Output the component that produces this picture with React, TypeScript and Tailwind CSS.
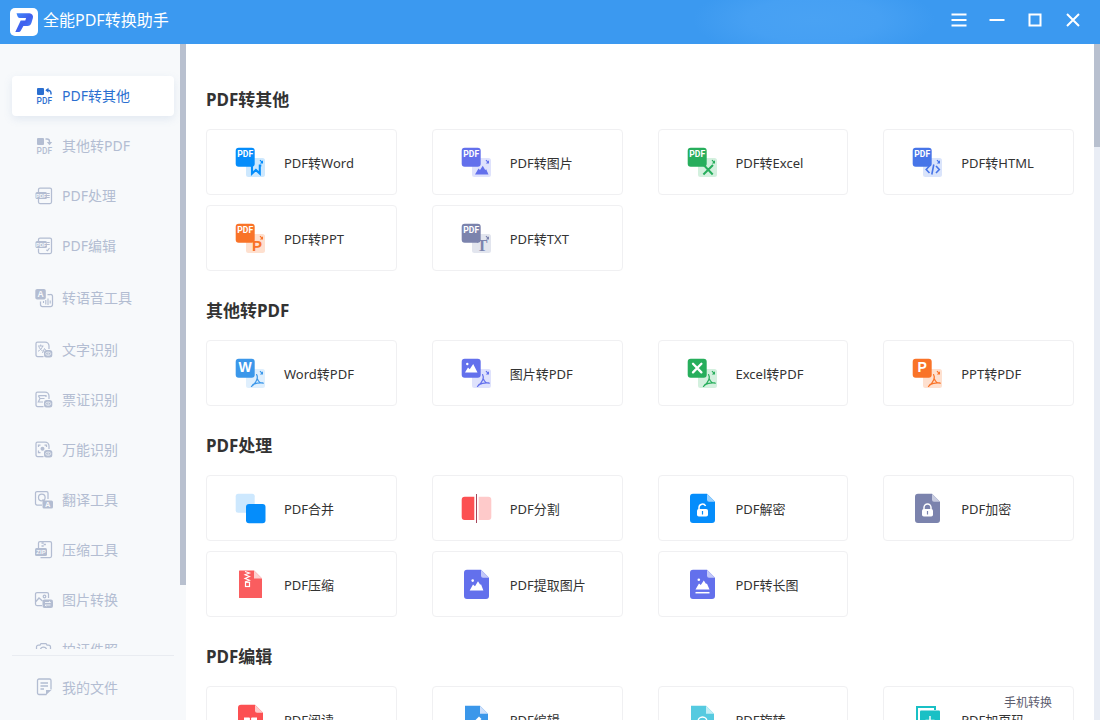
import type { ReactNode } from "react";

/* ---------- shared icon pieces ---------- */

function ToolSvg({ children }: { children: ReactNode }) {
  return (
    <svg viewBox="0 0 32 32" className="size-8 shrink-0" aria-hidden="true">
      {children}
    </svg>
  );
}

const LETTER = "'Liberation Sans', sans-serif";

function PairIcon({
  color,
  light,
  front,
  back,
}: {
  color: string;
  light: string;
  front: ReactNode;
  back: ReactNode;
}) {
  return (
    <ToolSvg>
      <rect x="12" y="12" width="19" height="19" rx="2.5" fill={light} />
      <rect x="1.7" y="1.7" width="19" height="19" rx="3" fill={color} />
      <path d="M26 14.200l2.200 2.200" stroke={color} strokeWidth="1.2" fill="none" />
      <path d="M29 14.200v3.200h-3.200z" fill={color} />
      {front}
      {back}
    </ToolSvg>
  );
}

const pdfTag = (
  <text x="11.2" y="11.3" fontSize="8.6" fontWeight="700" fill="#fff" textAnchor="middle" fontFamily="Roboto, sans-serif">
    PDF
  </text>
);

function frontLetter(letter: string) {
  return (
    <text x="11.2" y="15.2" fontSize="14" fontWeight="700" fill="#fff" textAnchor="middle" fontFamily={LETTER}>
      {letter}
    </text>
  );
}

function acrobat(color: string) {
  return (
    <path
      d="M22.6 17.6c1.6 2.4.6 7.6-5.2 11.8M23.3 21.6c.9 2.900 2.600 4.600 6 4.600M18.800 27.600c3-1.500 6.200-2.100 9.800-1.700"
      stroke={color}
      strokeWidth="1.2"
      strokeLinecap="round"
      fill="none"
    />
  );
}

function Doc({ color, fold, children }: { color: string; fold: string; children?: ReactNode }) {
  return (
    <ToolSvg>
      <path d="M7 1.700h14l8 8V28a3 3 0 0 1-3 3H7a3 3 0 0 1-3-3V4.700a3 3 0 0 1 3-3z" fill={color} />
      <path d="M21 1.700l8 8h-6a2 2 0 0 1-2-2z" fill={fold} />
      {children}
    </ToolSvg>
  );
}

/* ---------- tool icons ---------- */

const icons: Record<string, ReactNode> = {
  word: (
    <PairIcon
      color="#058dfb"
      light="#cde8fe"
      front={pdfTag}
      back={
        <path d="M16.500 19.500h1.500v8l3.900-3.600 3.900 3.600v-8h1.500" stroke="#058dfb" strokeWidth="2.100" fill="none" strokeLinejoin="miter" />
      }
    />
  ),
  image: (
    <PairIcon
      color="#6370ec"
      light="#dfe2fc"
      front={pdfTag}
      back={<path d="M15 28.500l3.500-6 1.500 1.500 2.800-4.300 2.400 4.200 1-.700 2.300 5.300z" fill="#6370ec" />}
    />
  ),
  excel: (
    <PairIcon
      color="#27ae5c"
      light="#d3f0de"
      front={pdfTag}
      back={<path d="M17.700 19l9 9.500M27 19l-9.600 9.500" stroke="#27ae5c" strokeWidth="2" fill="none" />}
    />
  ),
  html: (
    <PairIcon
      color="#4775e8"
      light="#dae4fb"
      front={pdfTag}
      back={
        <path
          d="M18.500 20l-3.300 3.500 3.300 3.500M25 20l3.300 3.500L25 27M22.800 18.500l-2 10"
          stroke="#4775e8"
          strokeWidth="1.600"
          fill="none"
        />
      }
    />
  ),
  ppt: (
    <PairIcon
      color="#f97328"
      light="#fee0cf"
      front={pdfTag}
      back={
        <text x="23" y="29" fontSize="15" fontWeight="700" fill="#f97328" textAnchor="middle" fontFamily={LETTER}>
          P
        </text>
      }
    />
  ),
  txt: (
    <PairIcon
      color="#7b83ad"
      light="#e2e5ee"
      front={pdfTag}
      back={
        <text
          x="22"
          y="29"
          fontSize="16"
          fontWeight="700"
          fill="#7b83ad"
          textAnchor="middle"
          fontFamily="'Liberation Serif', serif"
        >
          T
        </text>
      }
    />
  ),
  fromWord: <PairIcon color="#3b97ea" light="#dfeffd" front={frontLetter("W")} back={acrobat("#3b97ea")} />,
  fromImage: (
    <PairIcon
      color="#6370ec"
      light="#dfe2fc"
      front={
        <>
          <path d="M5 15.500l3-5 1.700 1.800 3.500-5.300 4.300 8.500z" fill="#fff" />
          <circle cx="7.300" cy="7" r="1.200" fill="#fff" />
        </>
      }
      back={acrobat("#6370ec")}
    />
  ),
  fromExcel: (
    <PairIcon
      color="#27ae5c"
      light="#d3f0de"
      front={<path d="M7 6.800l8.400 8.600M15.400 6.800L7 15.400" stroke="#fff" strokeWidth="2.300" strokeLinecap="round" />}
      back={acrobat("#27ae5c")}
    />
  ),
  fromPpt: <PairIcon color="#f97328" light="#fee0cf" front={frontLetter("P")} back={acrobat("#f97328")} />,
  merge: (
    <ToolSvg>
      <rect x="1.700" y="1.700" width="19" height="19" rx="2.500" fill="#cde8fe" />
      <rect x="12" y="12" width="19.500" height="19.200" rx="3" fill="#058dfb" />
    </ToolSvg>
  ),
  split: (
    <ToolSvg>
      <path d="M14.300 4.700v23.300H4.700a3 3 0 0 1-3-3V7.700a3 3 0 0 1 3-3z" fill="#fc5052" />
      <path d="M18.700 4.700v23.300h9.600a3 3 0 0 0 3-3V7.700a3 3 0 0 0-3-3z" fill="#fecaca" />
      <path d="M16.500 2v29" stroke="#a5475c" strokeWidth="1" />
    </ToolSvg>
  ),
  unlock: (
    <Doc color="#058dfb" fold="#9bd1fe">
      <path d="M13 18v-2.500a3.500 3.500 0 0 1 6.600-1.500" stroke="#fff" strokeWidth="1.500" fill="none" />
      <rect x="11" y="17" width="11" height="7.500" rx="1.800" fill="#fff" />
      <path d="M16.500 19v3.500" stroke="#058dfb" strokeWidth="1.200" />
    </Doc>
  ),
  lock: (
    <Doc color="#7b83ad" fold="#c8cce0">
      <path d="M13 18v-2.500a3.500 3.500 0 0 1 7 0V18" stroke="#fff" strokeWidth="1.500" fill="none" />
      <rect x="11" y="17" width="11" height="7.500" rx="1.800" fill="#fff" />
      <path d="M16.500 19v3.500" stroke="#7b83ad" strokeWidth="1.200" />
    </Doc>
  ),
  zip: (
    <ToolSvg>
      <path d="M5.500 2.500H20l8 8V29.500a.5.5 0 0 1-.5.500H5.500a.5.500 0 0 1-.5-.500V3a.5.500 0 0 1 .5-.500z" fill="#fa5d5f" />
      <path d="M20 2.500l8 8h-8z" fill="#fdd0d0" />
      <path
        d="M11 3.500l4.500 1.500-4.500 1.800 4.500 1.800-4.500 1.800 4.500 1.800-4.500 1.800"
        stroke="#fff"
        strokeWidth="1.100"
        fill="none"
      />
      <rect x="11.500" y="14.300" width="4" height="4.200" fill="none" stroke="#fff" strokeWidth="1.200" />
    </ToolSvg>
  ),
  extract: (
    <Doc color="#6370ec" fold="#c3c8f8">
      <path d="M9.700 22.500l3.300-6 2 1.800 3-5 2.200 3.500.8-.600 2.400 6.300z" fill="#fff" />
      <circle cx="12.700" cy="12.600" r="1.300" fill="#fff" />
    </Doc>
  ),
  long: (
    <Doc color="#6370ec" fold="#c3c8f8">
      <path d="M9.500 21.500l3.500-6 1.800 1.500 3-4.500 2.300 3.500.8-.500 2.600 6z" fill="#fff" />
      <circle cx="12.800" cy="11.700" r="1.300" fill="#fff" />
      <path d="M9.500 24.700h14" stroke="#fff" strokeWidth="1.500" />
    </Doc>
  ),
  read: (
    <Doc color="#fc5052" fold="#fecaca">
      <path d="M10 14.500h5.200l1.300 1 1.300-1H23v9h-5.200l-1.300 1-1.300-1H10z" fill="#fff" />
      <path d="M16.500 15v9" stroke="#fc5052" strokeWidth="1.200" />
    </Doc>
  ),
  edit: (
    <ToolSvg>
      <path d="M5 2.800h15l8 8V31H5z" fill="#3b97ea" />
      <path d="M20 2.800l8 8h-8z" fill="#cfe0fb" />
      <path d="M12 23l1-3.500 6-6 2.500 2.500-6 6z" fill="#fff" />
    </ToolSvg>
  ),
  rotate: (
    <ToolSvg>
      <path d="M5 2.800h15l8 8V31H5z" fill="#55cae0" />
      <path d="M20 2.800l8 8h-8z" fill="#c3eef6" />
      <circle cx="16.500" cy="18.500" r="4.500" stroke="#fff" strokeWidth="1.300" fill="none" />
    </ToolSvg>
  ),
  pages: (
    <ToolSvg>
      <path d="M6 27V4h18v3" stroke="#19c0c5" strokeWidth="2" fill="none" />
      <rect x="9" y="7.500" width="20" height="23" rx="1" fill="#19c0c5" />
      <path d="M19 13v9M14.500 17.500h9" stroke="#fff" strokeWidth="1.400" />
    </ToolSvg>
  ),
};

const sections: { title: string; tools: { icon: string; label: string }[] }[] = [
  {
    title: "PDF转其他",
    tools: [
      { icon: "word", label: "PDF转Word" },
      { icon: "image", label: "PDF转图片" },
      { icon: "excel", label: "PDF转Excel" },
      { icon: "html", label: "PDF转HTML" },
      { icon: "ppt", label: "PDF转PPT" },
      { icon: "txt", label: "PDF转TXT" },
    ],
  },
  {
    title: "其他转PDF",
    tools: [
      { icon: "fromWord", label: "Word转PDF" },
      { icon: "fromImage", label: "图片转PDF" },
      { icon: "fromExcel", label: "Excel转PDF" },
      { icon: "fromPpt", label: "PPT转PDF" },
    ],
  },
  {
    title: "PDF处理",
    tools: [
      { icon: "merge", label: "PDF合并" },
      { icon: "split", label: "PDF分割" },
      { icon: "unlock", label: "PDF解密" },
      { icon: "lock", label: "PDF加密" },
      { icon: "zip", label: "PDF压缩" },
      { icon: "extract", label: "PDF提取图片" },
      { icon: "long", label: "PDF转长图" },
    ],
  },
  {
    title: "PDF编辑",
    tools: [
      { icon: "read", label: "PDF阅读" },
      { icon: "edit", label: "PDF编辑" },
      { icon: "rotate", label: "PDF旋转" },
      { icon: "pages", label: "PDF加页码" },
    ],
  },
];

/* ---------- sidebar icons, drawn in the current text colour ---------- */

function NavSvg({ children }: { children: ReactNode }) {
  return (
    <svg
      viewBox="0 0 18 18"
      className="size-[18px] shrink-0 overflow-visible"
      fill="none"
      stroke="currentColor"
      strokeWidth="1.25"
      aria-hidden="true"
    >
      {children}
    </svg>
  );
}

function navText(x: number, y: number, size: number, text: string, fill = "currentColor") {
  return (
    <text x={x} y={y} fontSize={size} fontWeight="700" fill={fill} stroke="none" textAnchor="middle" fontFamily={LETTER}>
      {text}
    </text>
  );
}

const pdfBelow = (
  <text x="9.3" y="17" fontSize="8.4" fontWeight="500" fill="currentColor" stroke="none" textAnchor="middle" fontFamily="Roboto, sans-serif">
    PDF
  </text>
);

const ocrPage = <path d="M8.500 15.500H2.500a1.500 1.500 0 0 1-1.500-1.500V2.500A1.500 1.500 0 0 1 2.500 1h7.500a4 4 0 0 1 4 4v3" />;
const ocrBadge = (
  <>
    <rect x="9" y="9" width="8.300" height="7.500" rx="2.500" fill="currentColor" stroke="none" />
    <ellipse cx="13.200" cy="12.700" rx="2.500" ry="1.700" stroke="#f7f9fb" strokeWidth="0.700" />
    <path d="M13.200 11.500v2.400" stroke="#f7f9fb" strokeWidth="0.700" />
  </>
);

const navIcons: Record<string, ReactNode> = {
  pdfTo: (
    <NavSvg>
      <rect x="2" y="1" width="7" height="7" rx="1" fill="currentColor" stroke="none" />
      <path d="M11.500 3.200h1.500a3 3 0 0 1 3 3v1.300" strokeWidth="1.500" />
      <path d="M13.500 0.700v5L10.300 3.200z" fill="currentColor" stroke="none" />
      {pdfBelow}
    </NavSvg>
  ),
  toPdf: (
    <NavSvg>
      <rect x="2" y="1" width="7" height="7" rx="1" fill="currentColor" stroke="none" />
      <path d="M10.500 2h1.500a2.500 2.500 0 0 1 2.500 2.500V6" strokeWidth="1.400" />
      <path d="M11.800 5h5.400l-2.700 3.200z" fill="currentColor" stroke="none" />
      {pdfBelow}
    </NavSvg>
  ),
  process: (
    <NavSvg>
      <path d="M3.500 5V2.500A1.500 1.500 0 0 1 5 1h10a1.500 1.500 0 0 1 1.500 1.500v12.500a1.500 1.500 0 0 1-1.500 1.500H5A1.500 1.500 0 0 1 3.500 15v-3" />
      <rect x="0.500" y="5" width="11.500" height="7" rx="1.500" fill="currentColor" stroke="none" />
      {navText(6.300, 10.500, 5.200, "PDF", "#f7f9fb")}
      <path d="M12 6.500h2.700M12 8.500h2.700M12 10.500h2.700" strokeWidth="1.100" />
    </NavSvg>
  ),
  edit: (
    <NavSvg>
      <path d="M3.500 4V2.500A1.500 1.500 0 0 1 5 1h10a1.500 1.500 0 0 1 1.500 1.500v12.500a1.500 1.500 0 0 1-1.500 1.500H5A1.500 1.500 0 0 1 3.500 15v-3.500" />
      <rect x="0.500" y="4" width="11.500" height="7" rx="1.500" fill="currentColor" stroke="none" />
      {navText(6.300, 9.500, 5.200, "PDF", "#f7f9fb")}
      <path d="M12 5.500h2.700M12 7.500h2.700M14.500 11l-2 2.700-1.300-.8" strokeWidth="1.100" />
    </NavSvg>
  ),
  voice: (
    <NavSvg>
      <rect x="0.300" y="0" width="10.500" height="10.500" rx="1.800" fill="currentColor" stroke="none" />
      {navText(5.500, 8.200, 8.500, "A", "#f7f9fb")}
      <path d="M12.500 5.500h3A1.800 1.800 0 0 1 17.500 7.500v8a1.800 1.800 0 0 1-2 2H7.500a1.800 1.800 0 0 1-2-2v-3" />
      <path d="M8.500 12v2M10.800 11v4.500M13 9.500v6.500M15.200 11.500v3" strokeWidth="1.100" />
    </NavSvg>
  ),
  text: (
    <NavSvg>
      {ocrPage}
      <path d="M3 5h5.500M5.700 3.500V5M7.700 5c-.7 2.300-2.500 4.300-4.700 5.300M3.800 5.500c.8 2 2 3.500 3.900 4.500M7.500 12l2-4.500 1.500 2" strokeWidth="1" />
      {ocrBadge}
    </NavSvg>
  ),
  ticket: (
    <NavSvg>
      {ocrPage}
      <path d="M3.300 4.700h7.700v1.300M3.300 4.700l1.700 2.800-1.700 3.500H8M5.500 7.500h4" strokeWidth="1.200" />
      {ocrBadge}
    </NavSvg>
  ),
  universal: (
    <NavSvg>
      {ocrPage}
      <path d="M3.500 6V4h2M9.500 4h2v2M3.500 9.500v2h2" />
      <circle cx="7.500" cy="7.700" r="2" fill="currentColor" stroke="none" />
      {ocrBadge}
    </NavSvg>
  ),
  translate: (
    <NavSvg>
      <path d="M7 14H2a1.500 1.500 0 0 1-1.500-1.500V2A1.500 1.500 0 0 1 2 .500h9.500A1.500 1.500 0 0 1 13 2v6" />
      <circle cx="6.800" cy="6.500" r="3.300" />
      <path d="M7.500 8.500l2.300 2.500" />
      <rect x="7.500" y="9.500" width="10.500" height="8" rx="1.500" fill="currentColor" stroke="none" />
      {navText(12.800, 16.200, 7.500, "A", "#f7f9fb")}
    </NavSvg>
  ),
  compress: (
    <NavSvg>
      <path d="M3.500 7V2A1.500 1.500 0 0 1 5 .500h10A1.500 1.500 0 0 1 16.500 2v13a1.500 1.500 0 0 1-1.500 1.500H5.500" />
      <path d="M6.500 2h2.200M8.700 3.500h2.200M6.500 5h2.200" strokeWidth="1.500" />
      <rect x="0" y="7" width="12" height="8" rx="1.500" fill="currentColor" stroke="none" />
      {navText(6, 13.200, 6, "ZIP", "#f7f9fb")}
    </NavSvg>
  ),
  picture: (
    <NavSvg>
      <path d="M7 14.500H2A1.500 1.500 0 0 1 .500 13V3A1.500 1.500 0 0 1 2 1.500h10A1.500 1.500 0 0 1 13.500 3v4M.500 11l3.500-4 3.500 3" />
      <circle cx="9.500" cy="5.500" r="1.300" />
      <rect x="7.500" y="8.500" width="10.500" height="8.500" rx="2" fill="currentColor" stroke="none" />
      <path d="M10 11.500h5.500l-1.300-1.200M15.500 14H10l1.300 1.200" stroke="#f7f9fb" strokeWidth="0.900" />
    </NavSvg>
  ),
  camera: (
    <NavSvg>
      <path d="M1.500 6A2 2 0 0 1 3.500 4h1.500l1-1.500h5l1 1.500H13.500a2 2 0 0 1 2 2v7a2 2 0 0 1-2 2h-10a2 2 0 0 1-2-2z" />
      <circle cx="8.500" cy="9" r="3" />
    </NavSvg>
  ),
  files: (
    <NavSvg>
      <path d="M11.500 15.500H4A1.500 1.500 0 0 1 2.500 14V1.500A1.500 1.500 0 0 1 4 0h10.500A1.500 1.500 0 0 1 16 1.500V10.500" strokeWidth="1.300" />
      <path d="M5.500 4h7.500M5.500 7h7.500M5.500 10h3.500" strokeWidth="1.300" />
      <path d="M11 16v-5h5.500z" fill="currentColor" stroke="none" />
    </NavSvg>
  ),
};

const navItems: { icon: string; label: string; active?: boolean; tall?: boolean }[] = [
  { icon: "pdfTo", label: "PDF转其他", active: true },
  { icon: "toPdf", label: "其他转PDF" },
  { icon: "process", label: "PDF处理" },
  { icon: "edit", label: "PDF编辑" },
  { icon: "voice", label: "转语音工具", tall: true },
  { icon: "text", label: "文字识别" },
  { icon: "ticket", label: "票证识别" },
  { icon: "universal", label: "万能识别" },
  { icon: "translate", label: "翻译工具" },
  { icon: "compress", label: "压缩工具" },
  { icon: "picture", label: "图片转换" },
  { icon: "camera", label: "拍证件照" },
];

function NavButton({ icon, label, active, tall }: { icon: string; label: string; active?: boolean; tall?: boolean }) {
  const tone = active
    ? "bg-white text-[#2b6fd0] shadow-[0_3px_8px_rgba(120,150,190,0.16)]"
    : "text-[#b3bdd2]";
  return (
    <button
      type="button"
      aria-current={active ? "page" : undefined}
      className={`flex w-full shrink-0 items-center gap-[9px] rounded pl-[23px] text-sm ${tall ? "h-11" : "h-10"} ${tone}`}
    >
      {navIcons[icon]}
      <span>{label}</span>
    </button>
  );
}

function WindowButton({ label, children }: { label: string; children: ReactNode }) {
  return (
    <button type="button" aria-label={label} className="flex h-10 w-[38px] items-center justify-center text-white">
      <svg viewBox="0 0 16 16" className="size-4" fill="none" stroke="currentColor" strokeWidth="2" aria-hidden="true">
        {children}
      </svg>
    </button>
  );
}

export default function App() {
  return (
    <div className="flex h-screen flex-col overflow-hidden bg-white font-['Noto_Sans','Noto_Sans_CJK_SC',sans-serif]">
      <header className="flex h-11 shrink-0 items-start justify-between bg-[#3b99f0] bg-[radial-gradient(ellipse_11%_90%_at_74%_45%,#49a2f3_0%,#46a0f3_55%,#3b99f0_100%)] pr-2 pl-2.5">
        <div className="flex h-11 items-center gap-[5px]">
          <svg viewBox="0 0 28 28" className="size-7" aria-hidden="true">
            <defs>
              <linearGradient id="logo" x1="0" y1="0" x2="1" y2="1">
                <stop offset="0" stopColor="#3f8bfb" />
                <stop offset="0.5" stopColor="#3f5fee" />
                <stop offset="1" stopColor="#4c8dfa" />
              </linearGradient>
            </defs>
            <rect width="28" height="28" rx="5" fill="#fff" />
            <path
              d="M6.500 5.300H19.500a3.600 3.600 0 0 1 3.400 4.600l-1.500 5a4.200 4.200 0 0 1-4 3h-4l-2.800 5a2 2 0 0 1-1.700 1H5.300l5.400-11.400h4.600l.8-2.600H9.700a2.400 2.400 0 0 1-2.200-1.600z"
              fill="url(#logo)"
            />
          </svg>
          <h1 className="pb-1 text-base leading-6 text-white">全能PDF转换助手</h1>
        </div>
        <div className="flex">
          <WindowButton label="菜单">
            <path d="M.5 2.500h15M.5 8h15M.5 13.500h15" />
          </WindowButton>
          <WindowButton label="最小化">
            <path d="M.5 8h15" />
          </WindowButton>
          <WindowButton label="最大化">
            <rect x="2.500" y="2.500" width="11" height="11" />
          </WindowButton>
          <WindowButton label="关闭">
            <path d="M2 2l12 12M14 2L2 14" />
          </WindowButton>
        </div>
      </header>

      <div className="flex min-h-0 flex-1">
        <aside className="flex w-[186px] shrink-0 bg-[#f7f9fb]">
          <div className="flex min-w-0 flex-1 flex-col">
            <nav className="flex min-h-0 flex-1 flex-col gap-2.5 overflow-y-auto pt-8 pr-1.5 pl-3 [scrollbar-width:none]">
              {navItems.map((item) => (
                <NavButton key={item.label} {...item} />
              ))}
            </nav>
            <div className="shrink-0 pt-1.5 pr-1.5 pb-3 pl-3">
              <div className="border-t border-[#e9ecf1] pt-3">
                <NavButton icon="files" label="我的文件" />
              </div>
            </div>
          </div>
          <div className="w-1.5 shrink-0">
            <div className="h-4/5 bg-[#b8c0cf]" />
          </div>
        </aside>

        <div className="relative flex min-w-0 flex-1">
          <main className="flex min-w-0 flex-1 flex-col gap-7 overflow-y-auto px-5 pt-11 pb-7 [scrollbar-width:none]">
            {sections.map((section) => (
              <section key={section.title} className="shrink-0">
                <h2 className="mb-[17px] text-[17px] leading-6 font-bold text-[#333]">{section.title}</h2>
                <div className="grid grid-cols-4 gap-x-[35px] gap-y-2.5">
                  {section.tools.map((tool) => (
                    <button
                      key={tool.label}
                      type="button"
                      className="flex h-[66px] items-center gap-[18px] rounded border border-[#f0f0f2] bg-white pl-[27px] text-[13px] leading-5 text-[#333]"
                    >
                      {icons[tool.icon]}
                      <span className="pt-0.5">{tool.label}</span>
                    </button>
                  ))}
                </div>
              </section>
            ))}
          </main>
          <div className="w-1.5 shrink-0 bg-[#e9edf5]">
            <div className="h-[103px] bg-[#b8c0cf]" />
          </div>
          <a href="#mobile" className="absolute right-12 bottom-[7px] text-xs leading-5 text-[#5c5c6e]">
            手机转换
          </a>
        </div>
      </div>
    </div>
  );
}
